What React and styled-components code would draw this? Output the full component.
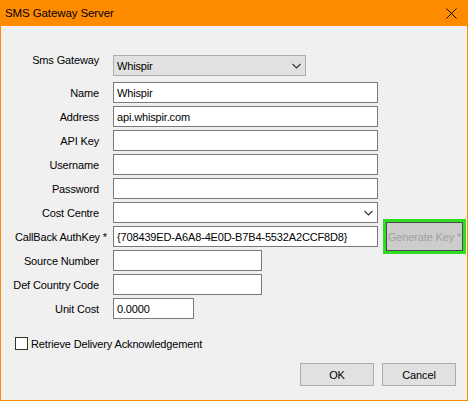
import React from "react";
import styled, { createGlobalStyle } from "styled-components";

const GlobalStyle = createGlobalStyle`
  html, body {
    margin: 0;
    padding: 0;
    background: #f0f0f0;
  }
`;

const Window = styled.div`
  width: 468px;
  height: 401px;
  display: flex;
  flex-direction: column;
  background: #f0f0f0;
  font-family: "Liberation Sans", Arial, sans-serif;
  font-size: 11px;
  letter-spacing: -0.15px;
  color: #000;
  box-sizing: border-box;
  overflow: hidden;
`;

const TitleBar = styled.div`
  height: 26px;
  flex: none;
  background: #ff8c00;
  display: flex;
  align-items: center;
  justify-content: space-between;
  padding: 0 11px 0 5px;
`;

const Title = styled.span`
  font-size: 11.5px;
  letter-spacing: -0.1px;
  color: #000;
`;

const Body = styled.div`
  flex: 1;
  display: flex;
  flex-direction: column;
  border: 1px solid #ff8c00;
  border-top: none;
  padding-top: 29px;
`;

const Form = styled.div`
  display: grid;
  grid-template-columns: 98px 1fr;
  column-gap: 14px;
  row-gap: 3px;
  align-items: center;
`;

const Label = styled.label`
  justify-self: end;
  white-space: nowrap;
  align-self: ${(p) => (p.$top ? "start" : "center")};
  margin-top: ${(p) => (p.$top ? "-1px" : "0")};
  margin-right: ${(p) => (p.$overhang ? "-8px" : "0")};
`;

const Field = styled.div`
  display: flex;
  align-items: center;
  margin-bottom: ${(p) => (p.$space ? "3px" : "0")};
`;

const Input = styled.div`
  width: ${(p) => p.$w}px;
  height: 21px;
  box-sizing: border-box;
  border: 1px solid #7a7a7a;
  background: #fff;
  padding: 0 3px;
  display: flex;
  align-items: center;
  white-space: nowrap;
  overflow: hidden;
`;

const Combo = styled.div`
  width: ${(p) => p.$w}px;
  height: 21px;
  box-sizing: border-box;
  border: 1px solid ${(p) => (p.$flat ? "#adadad" : "#7a7a7a")};
  background: ${(p) => (p.$flat ? "#e1e1e1" : "#fff")};
  padding: 0 4px 0 3px;
  display: flex;
  align-items: center;
  justify-content: space-between;
`;

const GenerateButton = styled.div`
  width: 77px;
  height: 29px;
  margin: -4px 0 -4px 8px;
  box-sizing: border-box;
  border: 1px solid #4a4a4a;
  outline: 3px solid #2fdc24;
  background: #cccccc;
  color: #a0a0a0;
  display: flex;
  align-items: center;
  justify-content: center;
  white-space: nowrap;
  overflow: hidden;
`;

const CheckRow = styled.div`
  display: flex;
  align-items: center;
  gap: 3px;
  margin: 18px 0 0 14px;
`;

const CheckBox = styled.span`
  width: 13px;
  height: 13px;
  box-sizing: border-box;
  border: 1px solid #333;
  background: #fff;
`;

const ButtonRow = styled.div`
  display: flex;
  justify-content: flex-end;
  gap: 8px;
  margin-top: 13px;
  padding-right: 11px;
`;

const Button = styled.div`
  width: 74px;
  height: 23px;
  box-sizing: border-box;
  border: 1px solid #adadad;
  background: #e1e1e1;
  display: flex;
  align-items: center;
  justify-content: center;
`;

const Chevron = () => (
  <svg width="9" height="6" viewBox="0 0 9 6">
    <path d="M0.5 1 L4.5 5 L8.5 1" fill="none" stroke="#333" strokeWidth="1.1" />
  </svg>
);

const CloseIcon = () => (
  <svg width="11" height="11" viewBox="0 0 11 11">
    <path d="M0.5 0.5 L10.5 10.5 M10.5 0.5 L0.5 10.5" stroke="#000" strokeWidth="1" />
  </svg>
);

const rows = [
  { label: "Name", value: "Whispir", w: 265 },
  { label: "Address", value: "api.whispir.com", w: 265 },
  { label: "API Key", value: "", w: 265 },
  { label: "Username", value: "", w: 265 },
  { label: "Password", value: "", w: 265 },
];

export default function App() {
  return (
    <>
      <GlobalStyle />
      <Window>
        <TitleBar>
          <Title>SMS Gateway Server</Title>
          <CloseIcon />
        </TitleBar>
        <Body>
          <Form>
            <Label $top>Sms Gateway</Label>
            <Field $space>
              <Combo $w={193} $flat>
                <span>Whispir</span>
                <Chevron />
              </Combo>
            </Field>

            {rows.map((r) => (
              <React.Fragment key={r.label}>
                <Label>{r.label}</Label>
                <Field>
                  <Input $w={r.w}>{r.value}</Input>
                </Field>
              </React.Fragment>
            ))}

            <Label>Cost Centre</Label>
            <Field>
              <Combo $w={265}>
                <span />
                <Chevron />
              </Combo>
            </Field>

            <Label $overhang>CallBack AuthKey *</Label>
            <Field>
              <Input $w={265}>{"{708439ED-A6A8-4E0D-B7B4-5532A2CCF8D8}"}</Input>
              <GenerateButton>Generate Key *</GenerateButton>
            </Field>

            <Label>Source Number</Label>
            <Field>
              <Input $w={149} />
            </Field>

            <Label>Def Country Code</Label>
            <Field>
              <Input $w={149} />
            </Field>

            <Label>Unit Cost</Label>
            <Field>
              <Input $w={81}>0.0000</Input>
            </Field>
          </Form>

          <CheckRow>
            <CheckBox />
            <span>Retrieve Delivery Acknowledgement</span>
          </CheckRow>

          <ButtonRow>
            <Button>OK</Button>
            <Button>Cancel</Button>
          </ButtonRow>
        </Body>
      </Window>
    </>
  );
}
